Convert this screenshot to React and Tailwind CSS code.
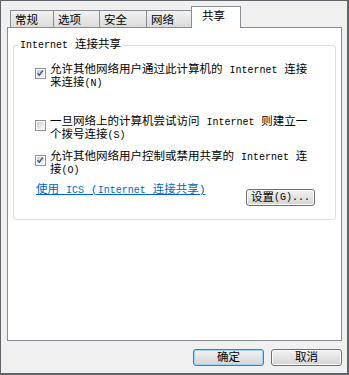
import React from "react";

const L = ({ children }) => <span className="text-[10px]">{children}</span>;

function Check({ checked }) {
    return (
        <span className="relative mt-[4px] flex h-[11px] w-[11px] shrink-0 border border-[#8e8f8f] bg-white p-px">
            <span className="block h-full w-full bg-gradient-to-br from-[#cbcfd5] to-[#f7f7f7]" />
            {checked && (
                <svg
                    viewBox="0 0 11 11"
                    className="absolute left-0 top-0 h-[9px] w-[9px]"
                >
                    <path
                        d="M1.8 5.2 L4 7.6 L8.4 1.8"
                        fill="none"
                        stroke="#3c5591"
                        strokeWidth="1.7"
                    />
                </svg>
            )}
        </span>
    );
}

function Option({ checked, lines, className = "" }) {
    return (
        <div className={`flex gap-[4px] pl-[21px] ${className}`}>
            <Check checked={checked} />
            <div className="leading-[12px] whitespace-pre text-[#000]">
                {lines.map((line, i) => (
                    <div key={i}>{line}</div>
                ))}
            </div>
        </div>
    );
}

function Tab({ label, active, width }) {
    if (active) {
        return (
            <div
                className="relative z-10 -mx-[2px] -mb-px flex h-[22px] items-start border border-b-0 border-[#898c95] bg-white pl-[10px] pt-[3px] leading-[13px]"
                style={{ width: width + 4 }}
            >
                {label}
            </div>
        );
    }
    return (
        <div
            className="-ml-px flex h-[17px] items-start border border-b-0 border-[#898c95] bg-gradient-to-b from-[#f2f2f2] to-[#dbdbdb] pl-[4px] pt-[3px] leading-[13px] first:ml-0"
            style={{ width }}
        >
            {label}
        </div>
    );
}

function Button({ children, primary, className = "" }) {
    return (
        <button
            className={`flex h-[17px] items-center justify-center rounded-[3px] border bg-gradient-to-b from-[#f2f2f2] to-[#d4d4d4] leading-[12px] ${
                primary
                    ? "border-[#3c7fb1] shadow-[inset_0_0_0_1px_#9fd6f5]"
                    : "border-[#707070] shadow-[inset_0_0_0_1px_#fcfcfc]"
            } ${className}`}
        >
            {children}
        </button>
    );
}

export default function App() {
    return (
        <div className="flex h-[375px] w-[349px] flex-col border border-b-2 border-r-2 border-[#5f646b] bg-[#f0f0f0] font-['Liberation_Mono','Noto_Sans_CJK_SC',monospace] text-[11.5px] text-black">
            <div className="pl-[6px] pt-[5px]">
                <div className="flex items-end pl-[3px]">
                    <Tab label="常规" width={44} />
                    <Tab label="选项" width={47} />
                    <Tab label="安全" width={48} />
                    <Tab label="网络" width={47} />
                    <Tab label="共享" width={46} active />
                </div>
                <div className="h-[314px] w-[335px] border border-[#898c95] bg-white">
                    <fieldset className="mx-[5px] mt-[10px] rounded-[3px] border border-[#d5dfe5] pb-[13px]">
                        <legend className="ml-[4px] px-[2px] leading-[13px]">
                            <L>Internet</L> 连接共享
                        </legend>
                        <Option
                            checked
                            className="mt-[12px]"
                            lines={[
                                <>
                                    允许其他网络用户通过此计算机的 <L>Internet</L> 连接
                                </>,
                                <>
                                    来连接<L>(N)</L>
                                </>,
                            ]}
                        />
                        <Option
                            className="mt-[26px]"
                            lines={[
                                <>
                                    一旦网络上的计算机尝试访问 <L>Internet</L> 则建立一
                                </>,
                                <>
                                    个拨号连接<L>(S)</L>
                                </>,
                            ]}
                        />
                        <Option
                            checked
                            className="mt-[9px]"
                            lines={[
                                <>
                                    允许其他网络用户控制或禁用共享的 <L>Internet</L> 连
                                </>,
                                <>
                                    接<L>(O)</L>
                                </>,
                            ]}
                        />
                        <div className="mt-[7px] flex items-start justify-between pl-[22px] pr-[20px]">
                            <a className="leading-[12px] whitespace-pre text-[#0066cc] underline">
                                使用 <L>ICS</L> (<L>Internet</L> 连接共享)
                            </a>
                            <Button className="mt-[5px] w-[69px]">
                                设置<L>(G)...</L>
                            </Button>
                        </div>
                    </fieldset>
                </div>
            </div>
            <div className="mt-[8px] flex justify-end gap-[7px] pr-[5px]">
                <Button primary className="w-[71px]">
                    确定
                </Button>
                <Button className="w-[71px]">取消</Button>
            </div>
        </div>
    );
}
